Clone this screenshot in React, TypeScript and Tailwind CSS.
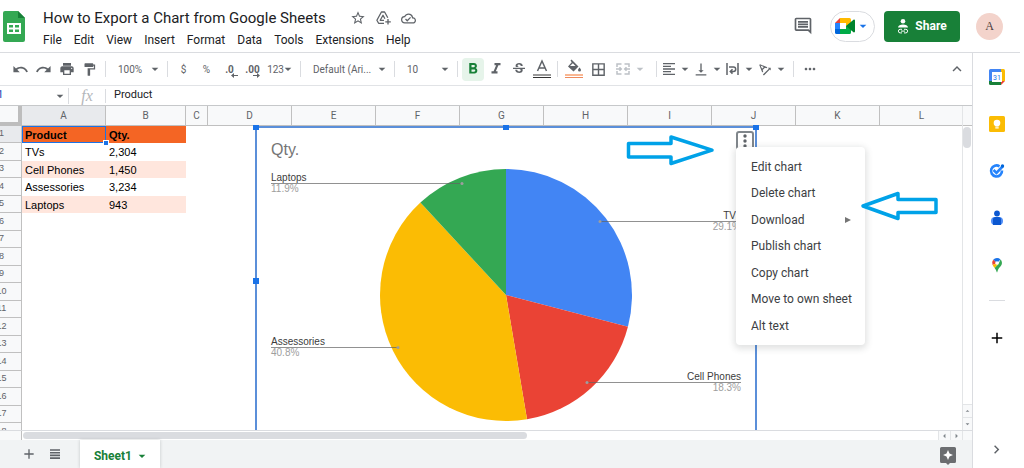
import { ReactNode } from 'react';
import {
  MdAdd,
  MdArrowDropDown,
  MdArrowDropUp,
  MdArrowLeft,
  MdArrowRight,
  MdBorderAll,
  MdChevronRight,
  MdExpandLess,
  MdFormatAlignLeft,
  MdFormatBold,
  MdFormatItalic,
  MdFormatPaint,
  MdMoreHoriz,
  MdOutlineCloudDone,
  MdOutlineInsertComment,
  MdPrint,
  MdRedo,
  MdStarBorder,
  MdStrikethroughS,
  MdTextRotationAngleup,
  MdUndo,
  MdVerticalAlignBottom,
} from 'react-icons/md';

const menus = ['File', 'Edit', 'View', 'Insert', 'Format', 'Data', 'Tools', 'Extensions', 'Help'];

const columns = ['A', 'B', 'C', 'D', 'E', 'F', 'G', 'H', 'I', 'J', 'K', 'L'];

const products = [
  { name: 'TVs', qty: 2304, color: '#4285f4' },
  { name: 'Cell Phones', qty: 1450, color: '#ea4335' },
  { name: 'Assessories', qty: 3234, color: '#fbbc04' },
  { name: 'Laptops', qty: 943, color: '#34a853' },
];

const rows: string[][] = [
  ['Product', 'Qty.'],
  ...products.map(p => [p.name, p.qty.toLocaleString('en-US')]),
  ...Array.from({ length: 13 }, () => ['', '']),
];

const chartMenu = [
  'Edit chart',
  'Delete chart',
  'Download',
  'Publish chart',
  'Copy chart',
  'Move to own sheet',
  'Alt text',
];

const labels = [
  { name: 'Laptops', x: 16, dot: 207, y: 57, anchor: 'start' },
  { name: 'TVs', x: 486, dot: 345, y: 95, anchor: 'end' },
  { name: 'Assessories', x: 16, dot: 143, y: 221, anchor: 'start' },
  { name: 'Cell Phones', x: 486, dot: 332, y: 256, anchor: 'end' },
] as const;

const total = products.reduce((sum, p) => sum + p.qty, 0);

const CX = 251;
const CY = 169;
const R = 126;

const point = (share: number) => {
  const angle = share * Math.PI * 2;
  return `${CX + R * Math.sin(angle)} ${CY - R * Math.cos(angle)}`;
};

const slices = products.map((p, i) => {
  const start = products.slice(0, i).reduce((sum, q) => sum + q.qty, 0) / total;
  const end = start + p.qty / total;
  return { ...p, d: `M${CX} ${CY}L${point(start)}A${R} ${R} 0 0 1 ${point(end)}Z` };
});

const Divider = () => <div className="mx-1 h-4 w-px shrink-0 bg-[#dadce0]" />;

const Tool = ({ label, children, className = 'w-[23px]' }: { label: string; children: ReactNode; className?: string }) => (
  <button aria-label={label} className={`flex h-[23px] shrink-0 items-center justify-center ${className}`}>
    {children}
  </button>
);

const Caret = ({ className = '' }: { className?: string }) => (
  <MdArrowDropDown size={16} className={`shrink-0 ${className}`} />
);

const SheetsLogo = () => (
  <svg width="22" height="31" viewBox="0 0 22 31">
    <path d="M2 0h13l7 7v22a2 2 0 0 1-2 2H2a2 2 0 0 1-2-2V2a2 2 0 0 1 2-2z" fill="#34a853" />
    <path d="M15 0l7 7h-7z" fill="#188038" />
    <path d="M4 12h14v11H4z" fill="#fff" />
    <path d="M6 14h4v2.500H6zM12 14h4v2.500h-4zM6 18.500h4V21H6zM12 18.500h4V21h-4z" fill="#34a853" />
  </svg>
);

const MeetLogo = () => (
  <svg width="20" height="16" viewBox="0 0 20 16">
    <path d="M5 0v5H0z" fill="#ea4335" />
    <path d="M0 5h5v6H0z" fill="#2684fc" />
    <path d="M0 11h5v5H1.500A1.500 1.500 0 0 1 0 14.500z" fill="#0066da" />
    <path d="M5 0h9.500A1.500 1.500 0 0 1 16 1.500V6l-5 2V5H5z" fill="#ffba00" />
    <path d="M5 11h6V8l5-3v9.500a1.500 1.500 0 0 1-1.500 1.500H5z" fill="#00ac47" />
    <path d="M11 8l7.500-6.200c.6-.5 1.500-.2 1.500.6v11.200c0 .8-.9 1.100-1.500.6z" fill="#00832d" />
  </svg>
);

const DriveIcon = () => (
  <svg width="15" height="14" viewBox="0 0 15 14" fill="none" stroke="currentColor" strokeWidth="1.300">
    <path d="M8 12.300H2.600L.9 9.300 5.400 1h3.200l3.200 5.700" strokeLinejoin="round" />
    <path d="M8 9.300H4.200L7 4.300l1.900 3.400" strokeLinejoin="round" />
    <path d="M12 8v5.500M9.300 10.800h5.500" />
  </svg>
);

const ShareIcon = () => (
  <svg width="12" height="15" viewBox="0 0 12 15" fill="none">
    <circle cx="6" cy="2.300" r="2.300" fill="#fff" />
    <path d="M1 8.500c0-2 2.500-3 5-3s5 1 5 3z" fill="#fff" />
    <path d="M5 10.300H3.200a1.800 1.800 0 0 0 0 3.600H5M7 10.300h1.800a1.800 1.800 0 0 1 0 3.600H7M4 12.100h4" stroke="#fff" />
  </svg>
);

const Header = () => (
  <header className="flex h-[53px] shrink-0 items-center border-b border-[#dadce0] pl-[3px] pr-[17px]">
    <SheetsLogo />
    <div className="ml-3 flex flex-col pt-1 text-[#202124]">
      <div className="flex items-center pl-1.5">
        <h1 className="text-[15px] leading-6">How to Export a Chart from Google Sheets</h1>
        <div className="ml-6 flex items-center gap-2.5 text-[#5f6368]">
          <button aria-label="Star"><MdStarBorder size={16} /></button>
          <button aria-label="Add to Drive"><DriveIcon /></button>
          <button aria-label="Saved to Drive"><MdOutlineCloudDone size={15} /></button>
        </div>
      </div>
      <nav className="flex gap-3 pl-1.5 text-xs leading-5">
        {menus.map(menu => (
          <button key={menu}>{menu}</button>
        ))}
      </nav>
    </div>
    <div className="ml-auto flex items-center">
      <button aria-label="Comments" className="text-[#5f6368]"><MdOutlineInsertComment size={20} /></button>
      <button aria-label="Meet" className="ml-[17px] flex h-[31px] w-[45px] items-center justify-center rounded-full border border-[#dadce0] text-[#1a73e8]">
        <MeetLogo />
        <Caret />
      </button>
      <button className="ml-[9px] flex h-[31px] w-[76px] items-center justify-center gap-1.5 rounded bg-[#188038] text-xs font-bold text-white">
        <ShareIcon />
        Share
      </button>
      <div className="ml-4 flex h-[27px] w-[27px] items-center justify-center rounded-full bg-[#f3d3cb] font-['Liberation_Serif',serif] text-xs text-[#4a3b3b]">
        A
      </div>
    </div>
  </header>
);

const Toolbar = () => (
  <div className="flex h-[33px] shrink-0 items-center border-b border-[#e1e3e6] pl-[9px] text-[10px] whitespace-nowrap text-[#5f6368]">
    <Tool label="Undo"><MdUndo size={17} /></Tool>
    <Tool label="Redo"><MdRedo size={17} /></Tool>
    <Tool label="Print"><MdPrint size={16} /></Tool>
    <Tool label="Paint format"><MdFormatPaint size={15} /></Tool>
    <Divider />
    <button className="flex w-[53px] shrink-0 items-center justify-between pl-2">100%<Caret /></button>
    <Divider />
    <Tool label="Format as currency">$</Tool>
    <Tool label="Format as percent">%</Tool>
    <Tool label="Decrease decimal places">
      <span className="relative font-bold">
        .0
        <svg className="absolute -bottom-px left-1.5" width="7" height="5" viewBox="0 0 7 5"><path d="M3 0v2h4v1H3v2L0 2.500z" fill="currentColor" /></svg>
      </span>
    </Tool>
    <Tool label="Increase decimal places">
      <span className="relative font-bold">
        .00
        <svg className="absolute -bottom-px left-2" width="7" height="5" viewBox="0 0 7 5"><path d="M4 0v2H0v1h4v2l3-2.500z" fill="currentColor" /></svg>
      </span>
    </Tool>
    <button className="flex w-8 shrink-0 items-center justify-end">123<Caret className="-ml-1" /></button>
    <Divider />
    <button className="flex w-[85px] shrink-0 items-center justify-between pl-2">Default (Ari...<Caret /></button>
    <Divider />
    <button className="flex w-[54px] shrink-0 items-center justify-between pl-2">10<Caret /></button>
    <Divider />
    <Tool label="Bold" className="w-[22px] rounded-sm bg-[#e6f4ea] text-[#188038]"><MdFormatBold size={18} /></Tool>
    <Tool label="Italic"><MdFormatItalic size={18} /></Tool>
    <Tool label="Strikethrough"><MdStrikethroughS size={16} /></Tool>
    <Tool label="Text color">
      <svg width="18" height="20" viewBox="0 0 18 20">
        <path d="M4.500 12L9 2l4.500 10M6 9h6" fill="none" stroke="currentColor" strokeWidth="1.500" />
        <path d="M0 15h18v2H0z" fill="#9a9a9a" />
        <path d="M0 18h18v1H0z" fill="#333" />
      </svg>
    </Tool>
    <Divider />
    <Tool label="Fill color">
      <svg width="18" height="20" viewBox="0 0 18 20">
        <path d="M5.500 1.500l1-1 7 7-5 5-5.500-5 3.700-4.300z" fill="currentColor" />
        <path d="M7.800 4.300L5 7h5.500z" fill="#fff" />
        <path d="M14.500 8.500s1.500 1.700 1.500 2.600a1.500 1.500 0 0 1-3 0c0-.9 1.500-2.600 1.500-2.600z" fill="currentColor" />
        <path d="M0 15h18v2H0z" fill="#f9b793" />
        <path d="M0 18h18v1H0z" fill="#ee8a5d" />
      </svg>
    </Tool>
    <Tool label="Borders" className="w-[27px]"><MdBorderAll size={17} /></Tool>
    <Tool label="Merge cells" className="w-10 gap-0.5 text-[#bdc1c6]">
      <svg width="14" height="12" viewBox="0 0 14 12" fill="none" stroke="currentColor" strokeWidth="1.500">
        <path d="M5.500 1H1v3M8.500 1H13v3M5.500 11H1V8M8.500 11H13V8M0 6h5M14 6H9M3.500 4.200L5.300 6 3.500 7.800M10.500 4.200L8.700 6l1.800 1.800" />
      </svg>
      <Caret />
    </Tool>
    <Divider />
    <Tool label="Horizontal align" className="w-8"><MdFormatAlignLeft size={16} /><Caret /></Tool>
    <Tool label="Vertical align" className="w-8"><MdVerticalAlignBottom size={17} /><Caret /></Tool>
    <Tool label="Text wrapping" className="w-8 gap-0.5">
      <svg width="13" height="12" viewBox="0 0 13 12" fill="none" stroke="currentColor" strokeWidth="1.500">
        <path d="M1 0v12M12 0v12M3 4h4.500a2.200 2.200 0 0 1 0 4.400H4.500M6.500 6.200L4.300 8.400l2.200 2.200" />
      </svg>
      <Caret />
    </Tool>
    <Tool label="Text rotation" className="w-8"><MdTextRotationAngleup size={17} /><Caret /></Tool>
    <Divider />
    <Tool label="More"><MdMoreHoriz size={16} /></Tool>
    <Tool label="Hide the menus" className="ml-auto mr-1 w-[23px]"><MdExpandLess size={18} /></Tool>
  </div>
);

const FormulaBar = () => (
  <div className="flex h-5 shrink-0 items-center border-b border-[#c6c8ca] text-[11px]">
    <input
      aria-label="Name box"
      defaultValue="A1"
      className="-ml-2.5 w-[62px] bg-transparent text-[#1f3fb5] outline-none"
    />
    <button aria-label="Named ranges" className="text-[#5f6368]"><Caret /></button>
    <div className="h-4 w-px bg-[#dadce0]" />
    <label htmlFor="formula" className="w-9 text-center font-['Liberation_Serif',serif] text-base leading-4 text-[#b3b6ba] italic">
      fx
    </label>
    <div className="h-3.5 w-px bg-[#dadce0]" />
    <input id="formula" defaultValue="Product" className="min-w-0 flex-1 bg-transparent pl-2 text-[#202124] outline-none" />
  </div>
);

const Grid = () => (
  <table className="-ml-[18px] w-[982px] table-fixed border-separate border-spacing-0 font-['Liberation_Sans',Arial,sans-serif] text-[11px] leading-4">
    <colgroup>
      <col className="w-10" />
      {columns.map(c => (
        <col key={c} className={c === 'B' ? 'w-20' : c === 'C' ? 'w-[22px]' : 'w-[84px]'} />
      ))}
    </colgroup>
    <thead>
      <tr className="h-5 text-[#5f6368]">
        <td className="border-r-4 border-b-4 border-[#bdbdbd] bg-[#f8f9fa] p-0" />
        {columns.map(c => (
          <th
            key={c}
            className={`border-r border-b border-[#c0c0c0] p-0 font-['Roboto',sans-serif] text-[10px] font-normal ${c === 'A' ? 'bg-[#e8eaed]' : 'bg-[#f8f9fa]'}`}
          >
            {c}
          </th>
        ))}
      </tr>
    </thead>
    <tbody>
      {rows.map(([name, qty], i) => {
        const fill = i === 0 ? 'bg-[#f46524] font-bold' : i === 2 || i === 4 ? 'bg-[#ffe6dd]' : '';
        return (
          <tr key={i} className="h-[17px] even:h-[18px]">
            <th
              className={`border-r border-b border-[#c0c0c0] px-0 pt-0 pb-0.5 text-[9px] leading-3 font-normal text-[#5f6368] ${i === 0 ? 'bg-[#e8eaed]' : 'bg-[#f8f9fa]'}`}
            >
              {i + 1}
            </th>
            <td className={`relative px-[3px] py-0 whitespace-nowrap text-black ${fill}`}>
              {name}
              {i === 0 && (
                <div className="absolute inset-0 border border-[#1a73e8]">
                  <div className="absolute -right-1 -bottom-1 z-10 h-[6px] w-[6px] border border-white bg-[#1a73e8]" />
                </div>
              )}
            </td>
            <td className={`px-[3px] py-0 text-black ${fill}`}>{qty}</td>
            <td colSpan={10} className="p-0" />
          </tr>
        );
      })}
    </tbody>
  </table>
);

const PieChart = () => (
  <div className="absolute top-5 left-[255px] h-[340px] w-[502px] border-2 border-[#5b8fd9] bg-white">
    <svg className="absolute -top-0.5 -left-0.5 overflow-visible font-['Liberation_Sans',Arial,sans-serif]" width="502" height="340" viewBox="0 0 502 340">
      <text x="16" y="29" fontSize="16" fill="#757575">Qty.</text>
      {slices.map(s => (
        <path key={s.name} d={s.d} fill={s.color} />
      ))}
      {labels.map(l => {
        const { qty } = products.find(p => p.name === l.name)!;
        return (
          <g key={l.name} fontSize="10" textAnchor={l.anchor}>
            <path d={`M${l.x} ${l.y + 0.5}H${l.dot}`} stroke="#636363" strokeOpacity="0.7" />
            <circle cx={l.dot} cy={l.y + 0.5} r="1.500" fill="#9e9e9e" />
            <text x={l.x} y={l.y - 2} fill="#3c3c3c">{l.name}</text>
            <text x={l.x} y={l.y + 9} fill="#9e9e9e">{((qty / total) * 100).toFixed(1)}%</text>
          </g>
        );
      })}
      <g fill="#1a73e8">
        <path d="M-2 -1h6v5h-6zM248 -1h6v5h-6zM498 -1h6v5h-6zM-2 152h6v6h-6z" />
      </g>
    </svg>
  </div>
);

const ChartMenu = () => (
  <>
    <button
      aria-label="Chart options"
      className="absolute top-[25px] left-[736px] flex h-[19px] w-[18px] items-center justify-center rounded-[3px] border-2 border-[#80868b] bg-white"
    >
      <svg width="4" height="14" viewBox="0 0 4 14" fill="#5f6368">
        <circle cx="2" cy="2" r="1.700" />
        <circle cx="2" cy="7" r="1.700" />
        <circle cx="2" cy="12" r="1.700" />
      </svg>
    </button>
    <div role="menu" className="absolute top-[41px] left-[736px] w-[129px] rounded bg-white py-1.5 text-xs text-[#3c4043] shadow-[0_2px_6px_2px_rgba(60,64,67,0.15)]">
      {chartMenu.map(item => (
        <button key={item} role="menuitem" className="flex h-[26px] w-full items-center justify-between pr-3.5 pl-[15px] whitespace-nowrap odd:h-[27px]">
          {item}
          {item === 'Download' && (
            <svg width="6" height="6" viewBox="0 0 6 6" fill="#757575"><path d="M0 0l6 3-6 3z" /></svg>
          )}
        </button>
      ))}
    </div>
  </>
);

const Arrows = () => (
  <svg className="pointer-events-none absolute top-7 left-[625px]" width="314" height="90" viewBox="0 0 314 90" fill="none" stroke="#00a2e8" strokeWidth="3.500">
    <path d="M3.500 9.500H46V3L87 16.200 46 29.500V23H3.500z" strokeLinejoin="round" />
    <path d="M311 65.500H273V59.500L238 72l35 12.500v-6h38z" strokeLinejoin="round" />
  </svg>
);

const VerticalScrollbar = () => (
  <div className="flex w-[10px] shrink-0 flex-col border-l border-[#e3e5e7] bg-white text-[#80868b]">
    <div className="h-5 shrink-0 border-b border-[#c0c0c0] bg-[#f8f9fa]" />
    <div className="mt-px h-[21px] w-2 rounded-full bg-[#dadce0]" />
    <button aria-label="Scroll up" className="mt-auto flex h-[13px] items-center justify-center border-t border-[#e3e5e7] bg-[#f8f9fa]"><MdArrowDropUp size={12} /></button>
    <button aria-label="Scroll down" className="flex h-[13px] items-center justify-center border-t border-[#e3e5e7] bg-[#f8f9fa]"><MdArrowDropDown size={12} /></button>
  </div>
);

const HorizontalScrollbar = () => (
  <div className="flex h-[10px] shrink-0 items-center border-t border-[#dadce0] text-[#80868b]">
    <div className="h-full w-[22px] border-r border-[#c0c0c0] bg-[#f8f9fa]" />
    <div className="flex-1">
      <div className="ml-px h-[7px] w-[55%] rounded-full bg-[#dadce0]" />
    </div>
    <button aria-label="Scroll left" className="flex h-full w-3 items-center justify-center border-l border-[#e3e5e7] bg-[#f8f9fa]"><MdArrowLeft size={12} /></button>
    <button aria-label="Scroll right" className="flex h-full w-3 items-center justify-center border-l border-[#e3e5e7] bg-[#f8f9fa]"><MdArrowRight size={12} /></button>
    <div className="h-full w-[10px] border-l border-[#e3e5e7] bg-[#f8f9fa]" />
  </div>
);

const SheetTabs = () => (
  <footer className="flex h-7 shrink-0 items-center bg-[#f1f3f4] pr-4 pl-5 text-[#5f6368]">
    <button aria-label="Add sheet" className="flex w-[30px] pl-px"><MdAdd size={16} /></button>
    <button aria-label="All sheets" className="flex w-[30px]">
      <svg width="10" height="10" viewBox="0 0 10 10" stroke="currentColor" strokeWidth="1.600">
        <path d="M0 1h10M0 3.700h10M0 6.400h10M0 9.100h10" />
      </svg>
    </button>
    <button className="flex h-full w-20 items-center justify-center gap-0.5 bg-white pt-1 pl-1 text-xs font-bold text-[#188038] shadow-[0_0_3px_rgba(60,64,67,0.25)]">
      Sheet1
      <Caret />
    </button>
    <button aria-label="Explore" className="mt-1 ml-auto">
      <svg width="16" height="18" viewBox="0 0 16 18">
        <path d="M1.500 0h13A1.500 1.500 0 0 1 16 1.500v13a1.500 1.500 0 0 1-1.500 1.500H10l-2 2-2-2H1.500A1.500 1.500 0 0 1 0 14.500v-13A1.500 1.500 0 0 1 1.500 0z" fill="#6b6d70" />
        <path d="M8 3l1.500 3.500L13 8 9.500 9.500 8 13 6.500 9.500 3 8l3.500-1.500z" fill="#fff" />
      </svg>
    </button>
  </footer>
);

const apps = [
  {
    name: 'Calendar',
    icon: (
      <svg width="16" height="16" viewBox="0 0 16 16">
        <path d="M1.500 0H12v4H4v8H0V1.500A1.500 1.500 0 0 1 1.500 0z" fill="#4285f4" />
        <path d="M12 0h2.500A1.500 1.500 0 0 1 16 1.500V12h-4z" fill="#fbbc04" />
        <path d="M0 12h12v4H1.500A1.500 1.500 0 0 1 0 14.500z" fill="#188038" />
        <path d="M12 12h4l-4 4z" fill="#ea4335" />
        <path d="M3 3h10v10H3z" fill="#fff" />
        <text x="8" y="10.500" fontSize="7" textAnchor="middle" fill="#1a73e8">31</text>
      </svg>
    ),
  },
  {
    name: 'Keep',
    icon: (
      <svg width="16" height="16" viewBox="0 0 16 16">
        <rect width="16" height="16" rx="1.500" fill="#fbbc04" />
        <circle cx="8" cy="7" r="3.300" fill="#fff" />
        <path d="M6.300 9h3.400v1.500H6.300zM6.300 11.300h3.400v1.200H6.300z" fill="#fff" />
      </svg>
    ),
  },
  {
    name: 'Tasks',
    icon: (
      <svg width="16" height="16" viewBox="0 0 16 16" fill="none">
        <path d="M13 7.500a5.500 5.500 0 1 1-2.500-4.200" stroke="#2684fc" strokeWidth="2.600" />
        <path d="M4.500 7L7.500 10l6.500-7" stroke="#2684fc" strokeWidth="2.600" />
        <circle cx="13.500" cy="3" r="1.700" fill="#0066da" />
      </svg>
    ),
  },
  {
    name: 'Contacts',
    icon: (
      <svg width="14" height="16" viewBox="0 0 14 16">
        <rect x="1" y="7" width="12" height="8" rx="4" fill="#4f8df6" />
        <path d="M3 15V9.500A2.500 2.500 0 0 1 5.500 7h3A2.500 2.500 0 0 1 11 9.500V15z" fill="#0b57d0" />
        <circle cx="7" cy="3.500" r="2.900" fill="#0b57d0" />
      </svg>
    ),
  },
  {
    name: 'Maps',
    icon: (
      <svg width="12" height="16" viewBox="0 0 12 16">
        <path d="M6 1a5 5 0 0 0-3.800 1.700L6 6l3.500-3.600A5 5 0 0 0 6 1z" fill="#1a73e8" />
        <path d="M2.200 2.700A5 5 0 0 0 1.600 8L6 6z" fill="#ea4335" />
        <path d="M1.600 8c.5 1 1.200 1.900 2 2.900L8 6H6z" fill="#fbbc04" />
        <path d="M9.500 2.400C11.200 4 11.400 6.500 10.300 8.300 9 10.500 7 11.500 6.300 15c-.1.500-.5.500-.6 0-.3-1.600-1-2.900-2.100-4.100L7.500 7z" fill="#34a853" />
        <circle cx="6" cy="6" r="1.800" fill="#fff" />
      </svg>
    ),
  },
];

const SidePanel = () => (
  <aside className="flex w-12 shrink-0 flex-col items-center border-l border-[#dadce0]">
    {apps.map(app => (
      <button key={app.name} aria-label={app.name} className="flex h-[47px] items-center">
        {app.icon}
      </button>
    ))}
    <div className="mt-3 h-px w-4 bg-[#dadce0]" />
    <button aria-label="Get add-ons" className="mt-7"><MdAdd size={18} /></button>
    <button aria-label="Hide side panel" className="mt-auto mb-2.5 text-[#5f6368]"><MdChevronRight size={17} /></button>
  </aside>
);

const App = () => {
  return (
    <div className="flex h-screen flex-col overflow-hidden bg-white pr-1 font-['Roboto',sans-serif]">
      <Header />
      <div className="flex min-h-0 flex-1">
        <main className="flex min-w-0 flex-1 flex-col">
          <Toolbar />
          <FormulaBar />
          <div className="flex min-h-0 flex-1">
            <div className="relative min-w-0 flex-1 overflow-hidden">
              <Grid />
              <PieChart />
              <ChartMenu />
              <Arrows />
            </div>
            <VerticalScrollbar />
          </div>
          <HorizontalScrollbar />
          <SheetTabs />
        </main>
        <SidePanel />
      </div>
    </div>
  );
};

export default App;
